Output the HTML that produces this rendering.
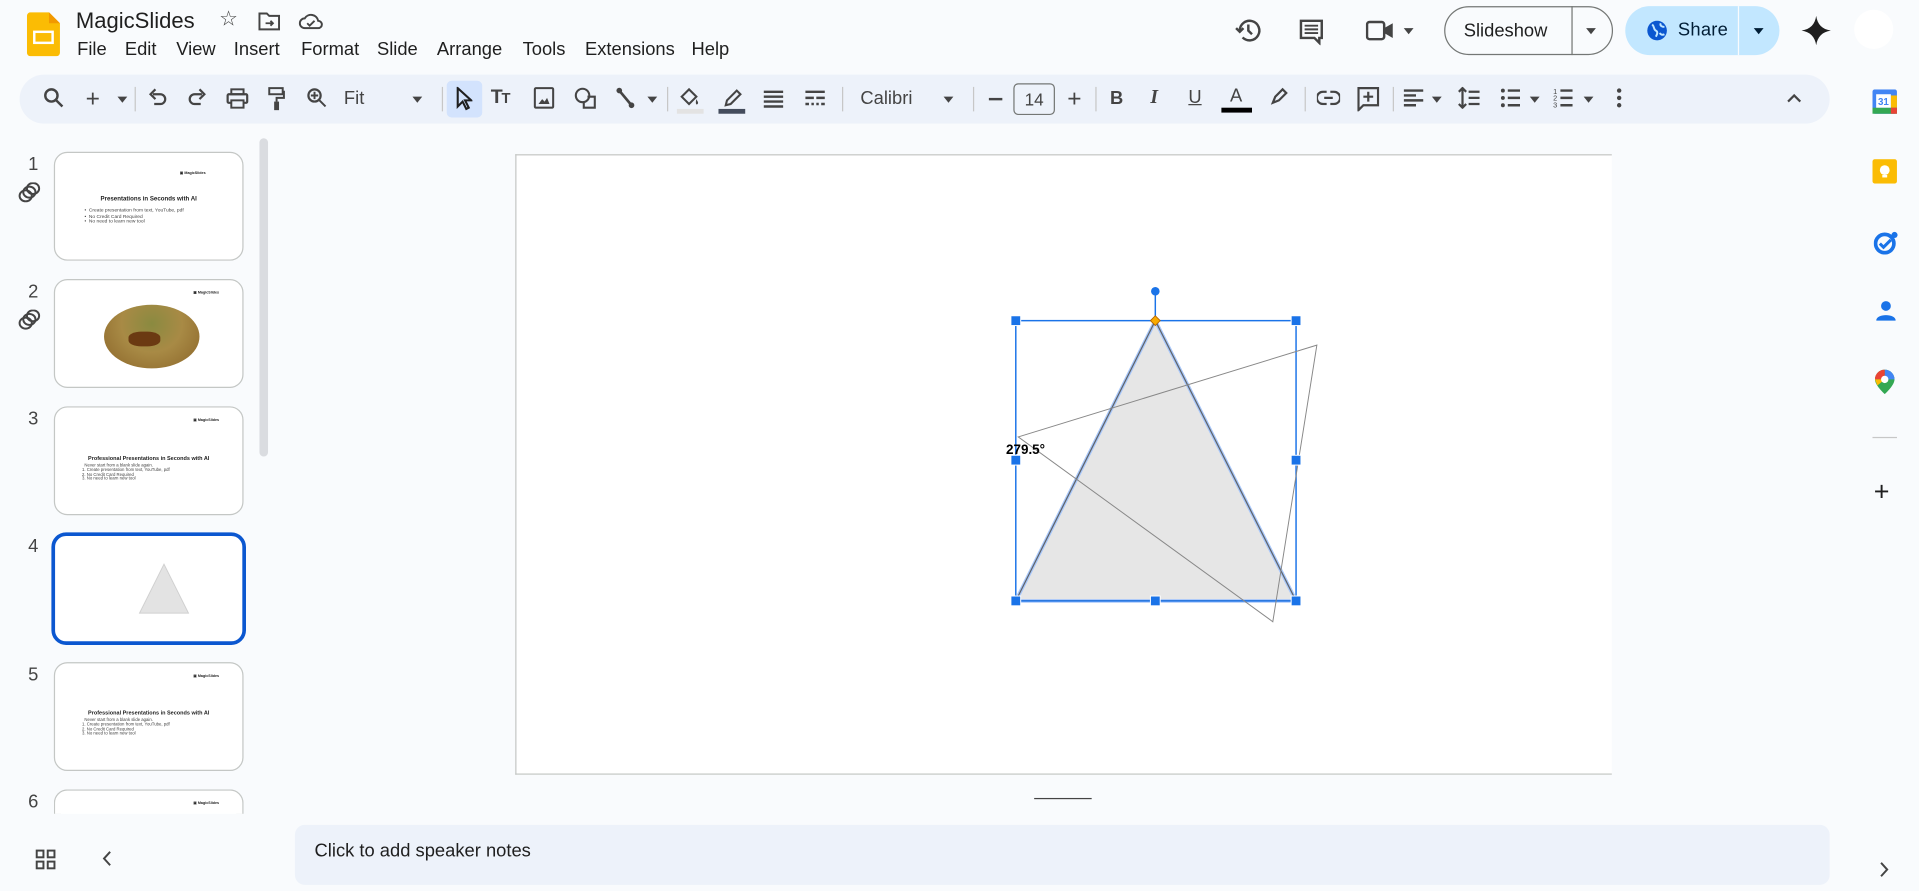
<!DOCTYPE html>
<html><head><meta charset="utf-8">
<style>
*{box-sizing:border-box;margin:0;padding:0}
html,body{width:1919px;height:891px;overflow:hidden;background:#f9fbfd;font-family:"Liberation Sans",Arial,sans-serif;color:#1f1f1f}
#w{position:absolute;left:0;top:0;width:1568px;height:728px;transform:scale(1.22385);transform-origin:0 0}
.a{position:absolute}
.menu span{position:absolute;top:32px;font-size:15px;color:#1f1f1f}
.tb{position:absolute;left:16px;top:61px;width:1479px;height:40px;border-radius:20px;background:#edf2fa}
.sep{position:absolute;top:71px;width:1px;height:20px;background:#c7c7c7}
.ic{position:absolute;top:71px}
.dd{position:absolute;top:79px;width:0;height:0;border-left:4px solid transparent;border-right:4px solid transparent;border-top:5px solid #444}
.th{position:absolute;left:44px;width:155px;height:89px;border:1px solid #c4c7c5;border-radius:11px;background:#fff;overflow:hidden}
.num{position:absolute;left:23px;font-size:15px;color:#444}
.logo{position:absolute;font-size:3px;font-weight:bold;color:#222}
.tt{position:absolute;font-size:5px;font-weight:bold;text-align:center;width:100%;left:0;color:#222}
.bl{position:absolute;font-size:4px;color:#444;line-height:4.5px}
</style></head><body><div id="w">
<svg class="a" style="left:22px;top:10px" width="27" height="36" viewBox="0 0 27 36"><path d="M3 0h15l9 9v24a3 3 0 0 1-3 3H3a3 3 0 0 1-3-3V3a3 3 0 0 1 3-3z" fill="#fbbc04"/><path d="M18 0v9h9z" fill="#f29900"/><rect x="6" y="16" width="15" height="9" fill="none" stroke="#fff" stroke-width="2"/></svg>
<div class="a" style="left:62px;top:7px;font-size:18px">MagicSlides</div>
<div class="a" style="left:179px;top:6px;font-size:17px;color:#444">☆</div>
<svg class="a" style="left:211px;top:9px" width="18" height="16" viewBox="0 0 18 16"><path d="M1 2h6l2 2h8v11H1z" fill="none" stroke="#444" stroke-width="1.6"/><path d="M6 10h6M10 8l2 2-2 2" stroke="#444" stroke-width="1.5" fill="none"/></svg>
<svg class="a" style="left:244px;top:9px" width="20" height="15" viewBox="0 0 20 15"><path d="M5 14a4 4 0 0 1 0-8 6 6 0 0 1 11 2 3 3 0 0 1 0 6z" fill="none" stroke="#444" stroke-width="1.6"/><path d="M7 10l2 2 4-4" stroke="#444" stroke-width="1.5" fill="none"/></svg>
<div class="menu"><span style="left:63px">File</span><span style="left:102px">Edit</span><span style="left:144px">View</span><span style="left:191px">Insert</span><span style="left:246px">Format</span><span style="left:308px">Slide</span><span style="left:357px">Arrange</span><span style="left:427px">Tools</span><span style="left:478px">Extensions</span><span style="left:565px">Help</span></div>
<svg class="a" style="left:1009px;top:14px" width="22" height="22" viewBox="0 0 22 22"><path d="M4 11a8 8 0 1 1 2.3 5.6" fill="none" stroke="#444" stroke-width="2"/><path d="M1 9l3 3 3-3" fill="none" stroke="#444" stroke-width="2"/><path d="M11 6v5l3 3" fill="none" stroke="#444" stroke-width="2"/></svg>
<svg class="a" style="left:1061px;top:15px" width="21" height="22" viewBox="0 0 21 22"><path d="M2 2h17v14h-2v4l-4-4H2z" fill="none" stroke="#444" stroke-width="2"/><path d="M5 6h11M5 9h11M5 12h11" stroke="#444" stroke-width="1.6"/></svg>
<svg class="a" style="left:1116px;top:15px" width="24" height="20" viewBox="0 0 24 20"><rect x="1" y="3" width="14" height="14" rx="2" fill="none" stroke="#444" stroke-width="2"/><path d="M15 8l7-4v12l-7-4z" fill="#444"/></svg>
<div class="dd" style="left:1147px;top:23px"></div>
<div class="a" style="left:1180px;top:5px;width:138px;height:40px;border:1px solid #747775;border-radius:20px"></div>
<div class="a" style="left:1284px;top:5px;width:1px;height:40px;background:#747775"></div>
<div class="a" style="left:1196px;top:17px;font-size:15px;color:#1f1f1f">Slideshow</div>
<div class="dd" style="left:1296px;top:23px"></div>
<div class="a" style="left:1328px;top:5px;width:126px;height:40px;border-radius:20px;background:#c2e7ff"></div>
<div class="a" style="left:1420px;top:5px;width:1px;height:40px;background:#f9fbfd"></div>
<svg class="a" style="left:1345px;top:16px" width="18" height="18" viewBox="0 0 18 18"><circle cx="9" cy="9" r="8" fill="#0b57d0"/><path d="M5 4c2 2 1 4 3 5s1 3 0 5M12 3c-1 2 1 3 3 3M11 11c1 1 2 2 4 1" stroke="#c2e7ff" stroke-width="1.6" fill="none"/></svg>
<div class="a" style="left:1371px;top:16px;font-size:15px;color:#001d35;letter-spacing:0.2px">Share</div>
<div class="dd" style="left:1433px;top:23px;border-top-color:#001d35"></div>
<svg class="a" style="left:1472px;top:13px" width="24" height="24" viewBox="0 0 24 24"><path d="M12 0C13 7 17 11 24 12 17 13 13 17 12 24 11 17 7 13 0 12 7 11 11 7 12 0z" fill="#1f1f1f"/></svg>
<div class="a" style="left:1515px;top:8px;width:32px;height:32px;border-radius:50%;background:#fff"></div>
<div class="tb"></div>
<div class="a" style="left:365px;top:66px;width:29px;height:30px;background:#d3e3fd;border-radius:4px"></div>
<svg class="ic" style="left:35px" width="18" height="18" viewBox="0 0 18 18"><circle cx="7" cy="7" r="5" fill="none" stroke="#444" stroke-width="2"/><path d="M11 11l5 5" stroke="#444" stroke-width="2"/></svg>
<div class="a" style="left:70px;top:70px;font-size:20px;color:#444">+</div><div class="dd" style="left:96px"></div>
<div class="sep" style="left:110px"></div>
<svg class="ic" style="left:121px" width="16" height="18" viewBox="0 0 16 18"><path d="M4 6h6a4 4 0 0 1 0 8H5" fill="none" stroke="#444" stroke-width="1.8"/><path d="M6 2L2 6l4 4" fill="none" stroke="#444" stroke-width="1.8"/></svg>
<svg class="ic" style="left:153px" width="16" height="18" viewBox="0 0 16 18"><path d="M12 6H6a4 4 0 0 0 0 8h5" fill="none" stroke="#444" stroke-width="1.8"/><path d="M10 2l4 4-4 4" fill="none" stroke="#444" stroke-width="1.8"/></svg>
<svg class="ic" style="left:185px" width="18" height="18" viewBox="0 0 18 18"><rect x="1" y="6" width="16" height="7" rx="1" fill="none" stroke="#444" stroke-width="1.8"/><rect x="4" y="2" width="10" height="4" fill="none" stroke="#444" stroke-width="1.6"/><rect x="4" y="11" width="10" height="6" fill="#edf2fa" stroke="#444" stroke-width="1.6"/></svg>
<svg class="ic" style="left:219px" width="14" height="20" viewBox="0 0 14 20"><rect x="1" y="1" width="11" height="5" fill="none" stroke="#444" stroke-width="1.6"/><path d="M12 4h1v5H7v3" fill="none" stroke="#444" stroke-width="1.6"/><rect x="5" y="12" width="4" height="7" fill="#444"/></svg>
<svg class="ic" style="left:250px" width="18" height="18" viewBox="0 0 18 18"><circle cx="7" cy="7" r="5" fill="none" stroke="#444" stroke-width="1.8"/><path d="M11 11l5 5M7 4v6M4 7h6" stroke="#444" stroke-width="1.6"/></svg>
<div class="a" style="left:281px;top:72px;font-size:15px;color:#444">Fit</div><div class="dd" style="left:337px"></div>
<div class="sep" style="left:361px"></div>
<svg class="ic" style="left:372px" width="14" height="20" viewBox="0 0 14 20"><path d="M2 1v15l4-4 3 6 2-1-3-6h5z" fill="none" stroke="#1f1f1f" stroke-width="1.7"/></svg>
<div class="a" style="left:401px;top:71px;font-size:16px;font-weight:bold;color:#444;letter-spacing:-1px">T<span style="font-size:12px">T</span></div>
<svg class="ic" style="left:436px" width="17" height="18" viewBox="0 0 17 18"><rect x="1" y="1" width="15" height="16" rx="1" fill="none" stroke="#444" stroke-width="1.7"/><path d="M4 14l3-4 2 2 2-3 2 5z" fill="#444"/></svg>
<svg class="ic" style="left:469px" width="19" height="19" viewBox="0 0 19 19"><circle cx="7" cy="7" r="5.5" fill="none" stroke="#444" stroke-width="1.7"/><path d="M11 8h6v9H8v-5" fill="none" stroke="#444" stroke-width="1.7"/></svg>
<svg class="ic" style="left:503px" width="16" height="18" viewBox="0 0 16 18"><path d="M3 3l10 12" stroke="#444" stroke-width="2.2"/><circle cx="3" cy="3" r="2.3" fill="#444"/><circle cx="13" cy="15" r="2.3" fill="#444"/></svg>
<div class="dd" style="left:529px"></div>
<div class="sep" style="left:545px"></div>
<svg class="ic" style="left:553px" width="22" height="22" viewBox="0 0 22 22"><path d="M4 8l6-6 6 6-6 6z" fill="none" stroke="#444" stroke-width="1.7"/><path d="M16 10c1 2 2 3 1 4s-2 0-1-4" fill="#444"/><rect x="0" y="18" width="22" height="4" fill="#e3e3e3"/></svg>
<svg class="ic" style="left:587px" width="22" height="22" viewBox="0 0 22 22"><path d="M6 15l1-4 8-8 3 3-8 8z" fill="none" stroke="#444" stroke-width="1.7"/><rect x="0" y="18" width="22" height="4" fill="#444c5c"/></svg>
<svg class="ic" style="left:624px" width="16" height="18" viewBox="0 0 16 18"><path d="M0 4h16M0 8h16M0 12h16M0 16h16" stroke="#444" stroke-width="2"/></svg>
<svg class="ic" style="left:658px" width="16" height="18" viewBox="0 0 16 18"><path d="M0 4h16M0 9h7M9 9h7M0 14h3M5 14h2M9 14h2M13 14h3" stroke="#444" stroke-width="2"/></svg>
<div class="sep" style="left:688px"></div>
<div class="a" style="left:703px;top:72px;font-size:15px;color:#444">Calibri</div><div class="dd" style="left:771px"></div>
<div class="sep" style="left:795px"></div>
<div class="a" style="left:808px;top:80px;width:11px;height:2px;background:#444"></div>
<div class="a" style="left:828px;top:68px;width:34px;height:26px;border:1px solid #747775;border-radius:4px;font-size:14px;color:#444;text-align:center;line-height:24px">14</div>
<div class="a" style="left:872px;top:70px;font-size:20px;color:#444">+</div>
<div class="sep" style="left:895px"></div>
<div class="a" style="left:907px;top:72px;font-size:15px;font-weight:bold;color:#444">B</div>
<div class="a" style="left:940px;top:71px;font-size:16px;font-style:italic;font-weight:bold;color:#444;font-family:'Liberation Serif',serif">I</div>
<div class="a" style="left:971px;top:71px;font-size:15px;color:#444;text-decoration:underline">U</div>
<div class="a" style="left:1005px;top:70px;font-size:15px;color:#444">A</div><div class="a" style="left:998px;top:88px;width:25px;height:4px;background:#000"></div>
<svg class="ic" style="left:1037px" width="16" height="18" viewBox="0 0 16 18"><path d="M3 13l2-5 6-6 3 3-6 6z" fill="none" stroke="#444" stroke-width="1.8"/></svg>
<div class="sep" style="left:1066px"></div>
<svg class="ic" style="left:1076px;top:74px" width="19" height="12" viewBox="0 0 19 12"><path d="M8 1H5a5 5 0 0 0 0 10h3M11 1h3a5 5 0 0 1 0 10h-3M6 6h7" fill="none" stroke="#444" stroke-width="1.8"/></svg>
<svg class="ic" style="left:1109px" width="18" height="20" viewBox="0 0 18 20"><path d="M1 1h16v14H5l-4 4z" fill="none" stroke="#444" stroke-width="1.8"/><path d="M9 4v8M5 8h8" stroke="#444" stroke-width="1.8"/></svg>
<div class="sep" style="left:1138px"></div>
<svg class="ic" style="left:1147px" width="16" height="18" viewBox="0 0 16 18"><path d="M0 3h16M0 7h10M0 11h16M0 15h10" stroke="#444" stroke-width="2"/></svg><div class="dd" style="left:1170px"></div>
<svg class="ic" style="left:1191px" width="18" height="18" viewBox="0 0 18 18"><path d="M4 1v16M1 4l3-3 3 3M1 14l3 3 3-3M9 4h9M9 9h9M9 14h9" fill="none" stroke="#444" stroke-width="1.8"/></svg>
<svg class="ic" style="left:1226px" width="16" height="18" viewBox="0 0 16 18"><circle cx="2" cy="3" r="1.6" fill="#444"/><circle cx="2" cy="9" r="1.6" fill="#444"/><circle cx="2" cy="15" r="1.6" fill="#444"/><path d="M6 3h10M6 9h10M6 15h10" stroke="#444" stroke-width="2"/></svg><div class="dd" style="left:1250px"></div>
<svg class="ic" style="left:1269px" width="16" height="18" viewBox="0 0 16 18"><text x="0" y="6" font-size="6" fill="#444">1</text><text x="0" y="11" font-size="6" fill="#444">2</text><text x="0" y="17" font-size="6" fill="#444">3</text><path d="M6 3h10M6 9h10M6 15h10" stroke="#444" stroke-width="2"/></svg><div class="dd" style="left:1294px"></div>
<svg class="ic" style="left:1320px" width="6" height="18" viewBox="0 0 6 18"><circle cx="3" cy="3" r="1.8" fill="#444"/><circle cx="3" cy="9" r="1.8" fill="#444"/><circle cx="3" cy="15" r="1.8" fill="#444"/></svg>
<svg class="ic" style="left:1460px;top:76px" width="12" height="8" viewBox="0 0 12 8"><path d="M1 7l5-5 5 5" fill="none" stroke="#444" stroke-width="1.8"/></svg>
<svg class="a" style="left:1530px;top:73px" width="20" height="20" viewBox="0 0 20 20"><rect x="0" y="0" width="20" height="20" rx="2" fill="#4285f4"/><rect x="0" y="15" width="20" height="5" fill="#34a853"/><rect x="15" y="5" width="5" height="10" fill="#fbbc04"/><rect x="15" y="15" width="5" height="5" fill="#ea4335"/><rect x="3" y="4" width="12" height="11" fill="#fff"/><text x="4.5" y="13" font-size="8" font-weight="bold" fill="#4285f4" font-family="Liberation Sans">31</text></svg>
<svg class="a" style="left:1530px;top:130px" width="20" height="20" viewBox="0 0 20 20"><rect width="20" height="20" rx="2" fill="#fbbc04"/><circle cx="10" cy="9" r="4" fill="#fff"/><rect x="8" y="13" width="4" height="2" fill="#fff"/></svg>
<svg class="a" style="left:1531px;top:188px" width="20" height="20" viewBox="0 0 20 20"><circle cx="9" cy="11" r="7.5" fill="none" stroke="#1a73e8" stroke-width="3"/><path d="M5 11l3 3 6-6" fill="none" stroke="#1a73e8" stroke-width="2.5"/><circle cx="17" cy="4" r="2.5" fill="#1a73e8"/></svg>
<svg class="a" style="left:1533px;top:245px" width="16" height="18" viewBox="0 0 16 18"><circle cx="8" cy="5" r="4" fill="#1a73e8"/><path d="M0 17c0-6 16-6 16 0z" fill="#1a73e8"/></svg>
<svg class="a" style="left:1532px;top:302px" width="16" height="20" viewBox="0 0 16 20"><path d="M8 0a8 8 0 0 1 8 8c0 5-8 12-8 12S0 13 0 8a8 8 0 0 1 8-8z" fill="#34a853"/><path d="M8 0a8 8 0 0 1 8 8L8 8z" fill="#4285f4"/><path d="M0 8a8 8 0 0 1 8-8v8z" fill="#ea4335"/><path d="M0 8h8l-6 5z" fill="#fbbc04"/><circle cx="8" cy="8" r="3" fill="#fff"/></svg>
<div class="a" style="left:1530px;top:357px;width:20px;height:1px;background:#c7c7c7"></div>
<div class="a" style="left:1531px;top:389px;font-size:22px;color:#1f1f1f">+</div>
<svg class="a" style="left:1536px;top:704px" width="8" height="13" viewBox="0 0 8 13"><path d="M1 1l5 5.5L1 12" fill="none" stroke="#444" stroke-width="1.6"/></svg>
<div class="a" style="left:212px;top:113px;width:7px;height:260px;border-radius:4px;background:#dadce0"></div>
<div class="num" style="top:126px">1</div>
<div class="num" style="top:230px">2</div>
<div class="num" style="top:334px">3</div>
<div class="num" style="top:438px">4</div>
<div class="num" style="top:543px">5</div>
<div class="num" style="top:647px">6</div>
<svg class="a" style="left:15px;top:149px" width="18" height="17" viewBox="0 0 18 17"><g fill="none" stroke="#444" stroke-width="1.6"><ellipse cx="6" cy="11" rx="5" ry="4.5"/><ellipse cx="9" cy="8" rx="5" ry="4.5"/><ellipse cx="12" cy="5" rx="5" ry="4.5"/></g></svg>
<svg class="a" style="left:15px;top:253px" width="18" height="17" viewBox="0 0 18 17"><g fill="none" stroke="#444" stroke-width="1.6"><ellipse cx="6" cy="11" rx="5" ry="4.5"/><ellipse cx="9" cy="8" rx="5" ry="4.5"/><ellipse cx="12" cy="5" rx="5" ry="4.5"/></g></svg>
<div class="th" style="top:124px"><div class="logo" style="left:102px;top:14px">▣ MagicSlides</div><div class="tt" style="top:35px">Presentations in Seconds with AI</div><div class="bl" style="left:24px;top:45px">•&nbsp; Create presentation from text, YouTube, pdf<br>•&nbsp; No Credit Card Required<br>•&nbsp; No need to learn new tool</div></div>
<div class="th" style="top:228px"><div class="logo" style="left:113px;top:8px">▣ MagicSlides</div><div class="a" style="left:40px;top:20px;width:78px;height:52px;border-radius:50%;background:radial-gradient(ellipse at 50% 30%,#8a8a40,#a88a45 45%,#8a6428)"></div><div class="a" style="left:60px;top:42px;width:26px;height:12px;background:#6b3a12;border-radius:40%"></div></div>
<div class="th" style="top:332px"><div class="logo" style="left:113px;top:8px">▣ MagicSlides</div><div class="tt" style="top:39px;font-size:4.5px">Professional Presentations in Seconds with AI</div><div class="bl" style="left:22px;top:46px;font-size:3.5px;line-height:3.8px">&nbsp; Never start from a blank slide again.<br>1. Create presentation from text, YouTube, pdf<br>2. No Credit Card Required<br>3. No need to learn new tool</div></div>
<div class="a" style="left:42px;top:435px;width:159px;height:92px;border:3px solid #0b57d0;border-radius:12px;background:#fff"></div>
<svg class="a" style="left:113px;top:460px" width="42" height="42" viewBox="0 0 42 42"><path d="M21 1L1 41h40z" fill="#e3e3e3" stroke="#d0d0d0" stroke-width="0.8"/></svg>
<div class="th" style="top:541px"><div class="logo" style="left:113px;top:8px">▣ MagicSlides</div><div class="tt" style="top:38px;font-size:4.5px">Professional Presentations in Seconds with AI</div><div class="bl" style="left:22px;top:45px;font-size:3.5px;line-height:3.8px">&nbsp; Never start from a blank slide again.<br>1. Create presentation from text, YouTube, pdf<br>2. No Credit Card Required<br>3. No need to learn new tool</div></div>
<div class="a" style="left:0;top:665px;width:230px;height:63px;background:#f9fbfd"></div>
<div class="th" style="top:645px;height:20px;border-bottom:none;border-radius:11px 11px 0 0"><div class="logo" style="left:113px;top:8px">▣ MagicSlides</div></div>
<svg class="a" style="left:29px;top:694px" width="17" height="17" viewBox="0 0 17 17"><g fill="none" stroke="#444" stroke-width="1.6"><rect x="1" y="1" width="5.5" height="5.5"/><rect x="10" y="1" width="5.5" height="5.5"/><rect x="1" y="10" width="5.5" height="5.5"/><rect x="10" y="10" width="5.5" height="5.5"/></g></svg>
<svg class="a" style="left:83px;top:695px" width="8" height="13" viewBox="0 0 8 13"><path d="M7 1L2 6.5 7 12" fill="none" stroke="#444" stroke-width="1.6"/></svg>
<div class="a" style="left:421px;top:126px;width:900px;height:507px;background:#fff;border:1px solid #c4c7c5;border-right:none"></div>
<div class="a" style="left:1317px;top:110px;width:200px;height:540px;background:#f9fbfd"></div>
<svg class="a" style="left:800px;top:225px" width="300" height="300" viewBox="800 225 300 300">
<line x1="944" y1="238" x2="944" y2="262" stroke="#1a73e8" stroke-width="1.2"/>
<circle cx="944" cy="238" r="3.5" fill="#1a73e8"/>
<path d="M944 262L830 491h229z" fill="#e6e6e6" stroke="#a8c7fa" stroke-width="3"/>
<path d="M944 262L830 491h229z" fill="none" stroke="#5f6368" stroke-width="1"/>
<rect x="830" y="262" width="229" height="229" fill="none" stroke="#1a73e8" stroke-width="1.2"/>
<path d="M832 357L1076 282 1040 508z" fill="none" stroke="#888" stroke-width="0.8"/>
<path d="M944 258l4 4-4 4-4-4z" fill="#f9ab00" stroke="#b06000" stroke-width="0.7"/>
<g fill="#1a73e8" stroke="#fff" stroke-width="0.8"><rect x="826" y="258" width="8" height="8"/><rect x="1055" y="258" width="8" height="8"/><rect x="826" y="372" width="8" height="8"/><rect x="1055" y="372" width="8" height="8"/><rect x="826" y="487" width="8" height="8"/><rect x="940" y="487" width="8" height="8"/><rect x="1055" y="487" width="8" height="8"/></g>
<text x="822" y="371" font-size="11" font-weight="bold" fill="#000" font-family="Liberation Sans">279.5°</text>
</svg>
<div class="a" style="left:845px;top:652px;width:47px;height:1px;background:#444"></div>
<div class="a" style="left:241px;top:674px;width:1254px;height:49px;border-radius:8px;background:#edf2fa"></div>
<div class="a" style="left:257px;top:687px;font-size:15px;color:#1f1f1f">Click to add speaker notes</div>
</div></body></html>
